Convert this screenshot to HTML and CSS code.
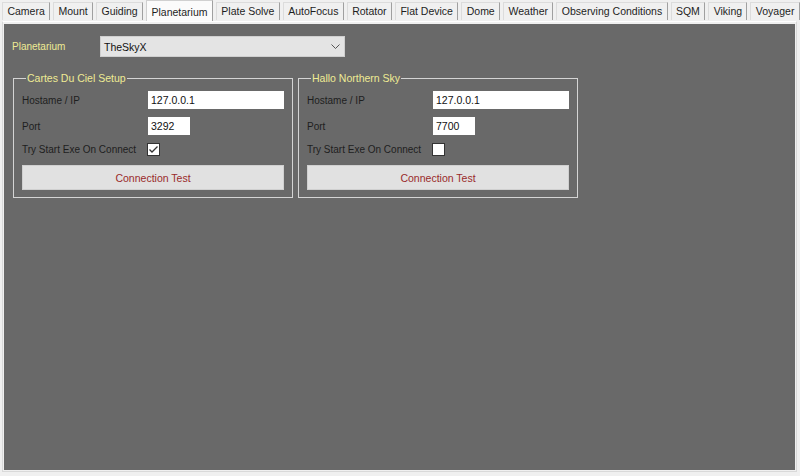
FILE: index.html
```html
<!DOCTYPE html>
<html lang="en">
<head>
    <meta charset="UTF-8">
    <title>Planetarium Settings</title>
    <link rel="stylesheet" href="styles.css">
</head>
<body>
    <div class="tabs">
        <div class="tab">Camera</div>
        <div class="tab">Mount</div>
        <div class="tab">Guiding</div>
        <div class="tab active">Planetarium</div>
        <div class="tab">Plate Solve</div>
        <div class="tab">AutoFocus</div>
        <div class="tab">Rotator</div>
        <div class="tab">Flat Device</div>
        <div class="tab">Dome</div>
        <div class="tab">Weather</div>
        <div class="tab">Observing Conditions</div>
        <div class="tab">SQM</div>
        <div class="tab">Viking</div>
        <div class="tab">Voyager</div>
    </div>
    <div class="panel">
        <div class="page">
            <div class="top-row">
                <span class="yellow label-main">Planetarium</span>
                <div class="combo">
                    <span>TheSkyX</span>
                    <svg width="9" height="6" viewBox="0 0 9 6"><polyline points="0.5,0.5 4.5,4.5 8.5,0.5" fill="none" stroke="#555" stroke-width="1"/></svg>
                </div>
            </div>
            <div class="groups">
                <fieldset class="group">
                    <legend class="yellow">Cartes Du Ciel Setup</legend>
                    <div class="field">
                        <span>Hostame / IP</span>
                        <div class="input wide">127.0.0.1</div>
                    </div>
                    <div class="field">
                        <span>Port</span>
                        <div class="input short">3292</div>
                    </div>
                    <div class="field check-row">
                        <span>Try Start Exe On Connect</span>
                        <div class="checkbox">
                            <svg width="11" height="11" viewBox="0 0 11 11"><polyline points="1.5,5.5 4,8 9.5,2.5" fill="none" stroke="#333" stroke-width="1.3"/></svg>
                        </div>
                    </div>
                    <button class="test">Connection Test</button>
                </fieldset>
                <fieldset class="group">
                    <legend class="yellow">Hallo Northern Sky</legend>
                    <div class="field">
                        <span>Hostame / IP</span>
                        <div class="input wide">127.0.0.1</div>
                    </div>
                    <div class="field">
                        <span>Port</span>
                        <div class="input short">7700</div>
                    </div>
                    <div class="field check-row">
                        <span>Try Start Exe On Connect</span>
                        <div class="checkbox"></div>
                    </div>
                    <button class="test">Connection Test</button>
                </fieldset>
            </div>
        </div>
    </div>
</body>
</html>
```

FILE: styles.css
```css
body {
    margin: 0;
    padding: 0;
    height: 476px;
    overflow: hidden;
    background-color: #f0f0f0;
    font-family: "Liberation Sans", Arial, sans-serif;
    font-size: 10px;
    color: #1e1e1e;
}
.tabs {
    display: flex;
    align-items: flex-end;
    height: 21px;
    padding-left: 2px;
}
.tab {
    height: 18px;
    line-height: 17px;
    padding: 0 4.4px;
    margin-right: 3px;
    margin-bottom: 1px;
    box-sizing: border-box;
    background-color: #f0f0f0;
    border: 1px solid #dcdcdc;
    border-right-color: #a0a0a0;
    border-bottom: none;
    white-space: nowrap;
    font-size: 10.5px;
}
.tab.active {
    height: 21px;
    line-height: 22px;
    margin-bottom: 0;
    background-color: #fbfbfb;
    border-color: #d0d0d0;
    border-right-color: #a0a0a0;
}
.panel {
    margin: 0 3px 0 2px;
    height: 451px;
    box-sizing: border-box;
    border: 1px solid #d9d9d9;
    border-top-color: #fff;
    padding: 2px 1px 1px 1px;
    background-color: #f0f0f0;
}
.page {
    height: 100%;
    background-color: #696969;
    padding: 12px 0 0 8px;
    box-sizing: border-box;
}
.yellow {
    color: #eeeb94;
}
.top-row {
    display: flex;
    align-items: center;
    height: 21px;
}
.label-main {
    width: 88px;
}
.combo {
    width: 245px;
    height: 21px;
    box-sizing: border-box;
    background-color: #e4e4e4;
    border: 1px solid #cfcfcf;
    display: flex;
    align-items: center;
    justify-content: space-between;
    padding: 0 4px 0 3px;
    color: #111;
    font-size: 10.5px;
}
.groups {
    display: flex;
    gap: 5px;
    margin-top: 15px;
    margin-left: 1px;
}
.group {
    width: 280px;
    box-sizing: border-box;
    margin: 0;
    border: 1px solid #d4d4d4;
    padding: 6px 8px 7px 8px;
    min-width: 0;
}
.group legend {
    padding: 0 1px;
    margin-left: 4px;
    line-height: 13px;
    font-size: 10.5px;
}
.field {
    display: flex;
    align-items: center;
    height: 18px;
    margin-bottom: 8px;
}
.field span {
    width: 126px;
    flex-shrink: 0;
}
.input {
    height: 18px;
    box-sizing: border-box;
    background-color: #fff;
    color: #111;
    padding: 1px 3px 0 3px;
    line-height: 16px;
    font-size: 10.5px;
}
.wide {
    width: 136px;
}
.short {
    width: 42px;
}
.check-row {
    height: 13px;
    margin-bottom: 9px;
}
.checkbox {
    width: 13px;
    height: 13px;
    box-sizing: border-box;
    background-color: #fff;
    border: 1px solid #333;
    margin-left: -1px;
    display: flex;
    align-items: center;
    justify-content: center;
}
.test {
    display: block;
    width: 100%;
    height: 25px;
    border: 1px solid #d0d0d0;
    background-color: #e1e1e1;
    color: #9a2a2a;
    font-family: "Liberation Sans", Arial, sans-serif;
    font-size: 10.5px;
    padding: 0;
}
```
